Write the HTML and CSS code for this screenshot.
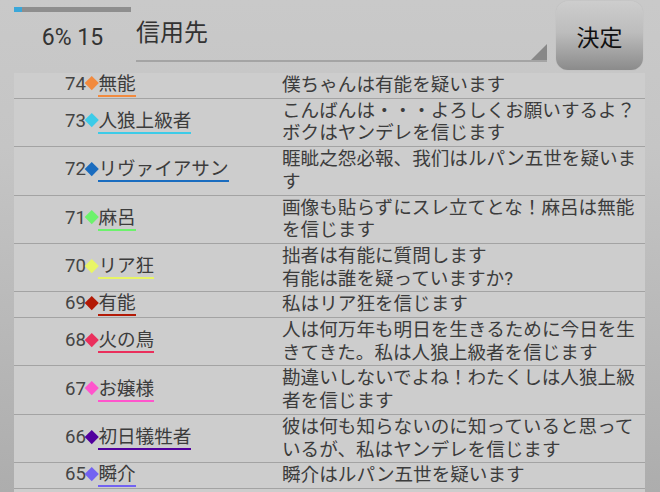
FILE: index.html
```html
<!DOCTYPE html>
<html lang="ja">
<head>
<meta charset="utf-8">
<title>信用先</title>
<link rel="stylesheet" href="styles.css">
</head>
<body>
<div class="app">
  <header class="top">
    <div class="stat">
      <div class="bar"><div class="bar-fill" style="width:7%"></div></div>
      <div class="stat-text">6% 15</div>
    </div>
    <div class="spinner">
      <span class="spinner-text">信用先</span>
      <span class="spinner-arrow"></span>
    </div>
    <button class="decide">決定</button>
  </header>

  <div class="list">
    <div class="row c74">
      <div class="who"><span class="tag"><span class="num">74</span><span class="dia"></span><span class="name">無能</span></span></div>
      <div class="msg">僕ちゃんは有能を疑います</div>
    </div>
    <div class="row c73">
      <div class="who"><span class="tag"><span class="num">73</span><span class="dia"></span><span class="name">人狼上級者</span></span></div>
      <div class="msg">こんばんは・・・よろしくお願いするよ？ボクはヤンデレを信じます</div>
    </div>
    <div class="row c72">
      <div class="who"><span class="tag"><span class="num">72</span><span class="dia"></span><span class="name">リヴァイアサン</span></span></div>
      <div class="msg">睚眦之怨必報、我们はルパン五世を疑います</div>
    </div>
    <div class="row c71">
      <div class="who"><span class="tag"><span class="num">71</span><span class="dia"></span><span class="name">麻呂</span></span></div>
      <div class="msg">画像も貼らずにスレ立てとな！麻呂は無能を信じます</div>
    </div>
    <div class="row c70">
      <div class="who"><span class="tag"><span class="num">70</span><span class="dia"></span><span class="name">リア狂</span></span></div>
      <div class="msg">拙者は有能に質問します<br>有能は誰を疑っていますか?</div>
    </div>
    <div class="row c69">
      <div class="who"><span class="tag"><span class="num">69</span><span class="dia"></span><span class="name">有能</span></span></div>
      <div class="msg">私はリア狂を信じます</div>
    </div>
    <div class="row c68">
      <div class="who"><span class="tag"><span class="num">68</span><span class="dia"></span><span class="name">火の鳥</span></span></div>
      <div class="msg">人は何万年も明日を生きるために今日を生きてきた。私は人狼上級者を信じます</div>
    </div>
    <div class="row c67">
      <div class="who"><span class="tag"><span class="num">67</span><span class="dia"></span><span class="name">お嬢様</span></span></div>
      <div class="msg">勘違いしないでよね！わたくしは人狼上級者を信じます</div>
    </div>
    <div class="row c66">
      <div class="who"><span class="tag"><span class="num">66</span><span class="dia"></span><span class="name">初日犠牲者</span></span></div>
      <div class="msg">彼は何も知らないのに知っていると思っているが、私はヤンデレを信じます</div>
    </div>
    <div class="row c65">
      <div class="who"><span class="tag"><span class="num">65</span><span class="dia"></span><span class="name">瞬介</span></span></div>
      <div class="msg">瞬介はルパン五世を疑います</div>
    </div>
  </div>
</div>
</body>
</html>
```

FILE: styles.css
```css
html, body {
  margin: 0;
  padding: 0;
}

body {
  width: 660px;
  height: 492px;
  overflow: hidden;
  font-family: Roboto, "Noto Sans CJK JP", sans-serif;
  color: #3c3c3c;
  background: linear-gradient(to bottom, #c9c9c9 0%, #c5c5c5 30%, #adadad 100%);
}

.app {
  display: flex;
  flex-direction: column;
  height: 492px;
}

/* ---------- header ---------- */
.top {
  display: flex;
  align-items: flex-start;
  height: 73px;
  flex: none;
}

.stat {
  margin-left: 14px;
  width: 117px;
  display: flex;
  flex-direction: column;
  align-items: stretch;
}

.bar {
  margin-top: 7px;
  height: 5px;
  background: #8e8e8e;
}

.bar-fill {
  height: 100%;
  background: #3aa7d9;
}

.stat-text {
  margin-top: 12px;
  font-size: 23px;
  line-height: 27px;
  text-align: center;
  color: #333;
}

.spinner {
  position: relative;
  margin-left: 5px;
  width: 411px;
  height: 60px;
  border-bottom: 2px solid #a4a4a4;
  box-sizing: content-box;
}

.spinner-text {
  display: block;
  padding-top: 21px;
  font-size: 24px;
  line-height: 24px;
  color: #333;
}

.spinner-arrow {
  position: absolute;
  right: 0;
  bottom: 0;
  width: 0;
  height: 0;
  border-left: 16px solid transparent;
  border-bottom: 16px solid #888;
}

.decide {
  margin-left: 9px;
  margin-top: 1px;
  width: 87px;
  height: 69px;
  border: none;
  border-radius: 12px;
  padding: 0;
  background: linear-gradient(to bottom, #cdcdcd 0%, #bdbdbd 45%, #8b8b8b 100%);
  box-shadow: 0 0 1px rgba(0, 0, 0, 0.15);
  font-family: Roboto, "Noto Sans CJK JP", sans-serif;
  font-size: 23px;
  color: #111;
  cursor: pointer;
}

/* ---------- list ---------- */
.list {
  margin-left: 14px;
  width: 631px;
  flex: 1;
  background: #cdcdcd;
}

.row {
  display: grid;
  grid-template-columns: 268px 1fr;
  border-bottom: 1px solid #a3a3a3;
}

.who {
  display: flex;
  align-items: center;
  padding-left: 51px;
  font-size: 18.6px;
}

.tag {
  line-height: 20px;
  white-space: nowrap;
}

.num {
  color: #444;
}

.dia {
  display: inline-block;
  width: 9.5px;
  height: 9.5px;
  margin: 0 1.6px 0 1.4px;
  vertical-align: 2px;
  transform: rotate(45deg);
  background: var(--c);
}

.name {
  display: inline-block;
  line-height: 21px;
  border-bottom: 2px solid var(--c);
  color: #3c3c3c;
}

.msg {
  padding: 1px 0;
  font-size: 18.6px;
  line-height: 22.7px;
  color: #3c3c3c;
}

.c74 { --c: #f28a3e; }
.c73 { --c: #3ccbe8; }
.c72 { --c: #1a6cbf; }
.c71 { --c: #6cf26c; }
.c70 { --c: #e8f565; }
.c69 { --c: #b31a06; }
.c68 { --c: #ea2f5c; }
.c67 { --c: #ff55cc; }
.c66 { --c: #52009e; }
.c65 { --c: #7262f2; }
```
